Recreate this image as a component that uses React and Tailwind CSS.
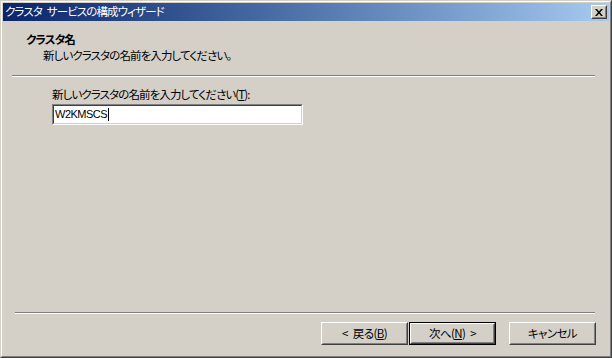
import React from "react";

const F = { fontFamily: '"Noto Sans CJK JP", "Noto Sans", sans-serif' };

function Btn({ children, def }) {
  const inner = (
    <div className="w-full h-full border border-t-white border-l-white border-r-[#404040] border-b-[#404040]">
      <div className="w-full h-full border border-t-[#d4d0c8] border-l-[#d4d0c8] border-r-[#808080] border-b-[#808080] flex items-center justify-center text-[11.5px] tracking-[-0.6px] leading-none text-black [font-feature-settings:'palt']">
        {children}
      </div>
    </div>
  );
  return (
    <div className={"h-[23px] w-[87px] " + (def ? "border border-black" : "")}>{inner}</div>
  );
}

export default function App() {
  return (
    <div style={F} className="w-[612px] h-[358px] bg-[#d4d0c8] border border-t-[#d4d0c8] border-l-[#d4d0c8] border-r-[#404040] border-b-[#404040]">
      <div className="w-full h-full border border-t-white border-l-white border-r-[#808080] border-b-[#808080] p-[1px] flex flex-col">
        {/* title bar */}
        <div className="h-[18px] flex items-center justify-between bg-gradient-to-r from-[#0a246a] to-[#a6caf0] pl-[2px] pr-[2px]">
          <span className="text-white text-[11.5px] leading-none [font-feature-settings:'palt'] tracking-[-0.9px] flex items-center">
            <span>クラスタ</span>
            <span className="inline-block w-[5px]" />
            <span>サービスの構成ウィザード</span>
          </span>
          <div className="w-[16px] h-[14px] bg-[#d4d0c8] border border-t-white border-l-white border-r-[#404040] border-b-[#404040]">
            <div className="w-full h-full border border-t-[#d4d0c8] border-l-[#d4d0c8] border-r-[#808080] border-b-[#808080] flex items-center justify-center">
              <svg width="8" height="7" viewBox="0 0 8 7">
                <path d="M0 0h2l2 2.5L6 0h2L5 3.5 8 7H6L4 4.5 2 7H0l3-3.5z" fill="#000" />
              </svg>
            </div>
          </div>
        </div>
        {/* header */}
        <div className="h-[54px] pt-[11px] flex flex-col text-black text-[11.5px] tracking-[-0.9px] [font-feature-settings:'palt']">
          <div className="pl-[23px] leading-[14px] font-bold">クラスタ名</div>
          <div className="pl-[40px] leading-[14px] mt-[2px]">新しいクラスタの名前を入力してください。</div>
        </div>
        <div className="ml-[9px] mr-[14px] h-[2px] border-t border-t-[#808080] border-b border-b-white" />
        {/* body */}
        <div className="pl-[49px] mt-[10px] flex flex-col text-[11.5px] tracking-[-0.9px] text-black [font-feature-settings:'palt']">
          <div className="leading-[14px]">
            新しいクラスタの名前を入力してください(<span className="underline">T</span>):
          </div>
          <div className="mt-[3px] w-[251px] h-[21px] border border-t-[#808080] border-l-[#808080] border-r-white border-b-white tracking-normal">
            <div className="w-full h-full bg-white border border-t-[#404040] border-l-[#404040] border-r-[#d4d0c8] border-b-[#d4d0c8] flex items-center pl-[1px]">
              <span className="text-[12px] leading-none tracking-[-0.5px]" style={{ fontFamily: '"Liberation Sans", sans-serif', fontSize: "11px" }}>W2KMSCS</span>
              <span className="w-[1px] h-[13px] bg-black ml-[1px]" />
            </div>
          </div>
        </div>
        <div className="flex-1" />
        <div className="ml-[12px] mr-[14px] h-[2px] border-t border-t-[#808080] border-b border-b-white" />
        <div className="mt-[8px] mb-[10px] flex justify-end pr-[13px]">
          <Btn>&lt;<span className="inline-block w-[5px]" />戻る(<span className="underline">B</span>)</Btn>
          <div className="w-[1px]" />
          <Btn def>次へ(<span className="underline">N</span>)<span className="inline-block w-[5px]" />&gt;</Btn>
          <div className="w-[13px]" />
          <Btn>キャンセル</Btn>
        </div>
      </div>
    </div>
  );
}
